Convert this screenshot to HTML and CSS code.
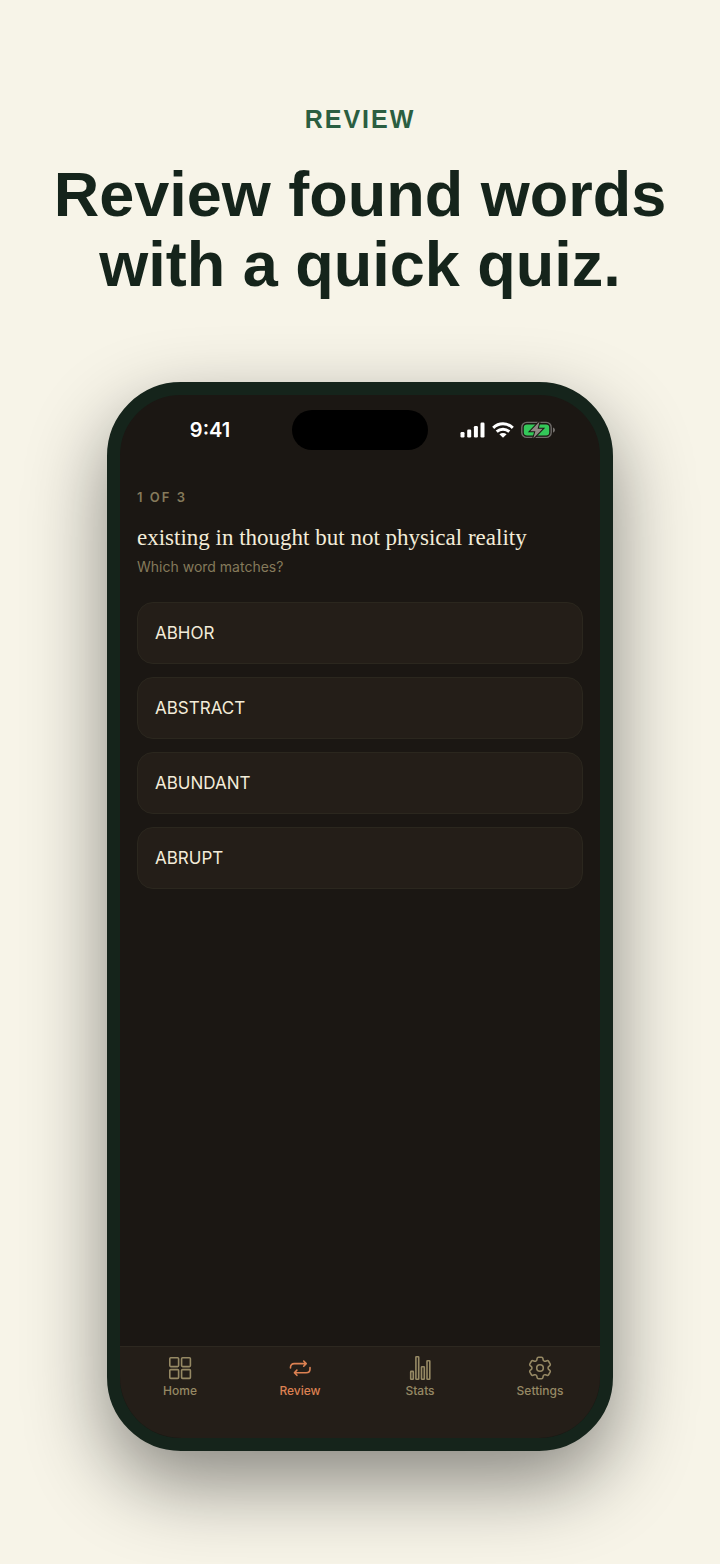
FILE: index.html
```html
<!DOCTYPE html>
<html lang="en">
<head>
<meta charset="utf-8">
<meta name="viewport" content="width=device-width, initial-scale=1">
<title>Review</title>
<link rel="stylesheet" href="styles.css">
</head>
<body>
<main class="promo">
  <header class="intro">
    <p class="eyebrow">REVIEW</p>
    <h1 class="headline">Review found words<br>with a quick quiz.</h1>
  </header>
  <section class="phone">
    <div class="status">
      <span class="clock">9:41</span>
      <span class="island"></span>
      <div class="indicators">
        <svg class="signal" width="25" height="16" viewBox="0 0 25 16" fill="#fff"><rect x="0.500" y="10" width="4" height="5.500" rx="1.200"/><rect x="7.200" y="7.500" width="4" height="8" rx="1.200"/><rect x="13.900" y="4" width="4" height="11.500" rx="1.200"/><rect x="20.500" y="0.500" width="4" height="15" rx="1.200"/></svg>
        <svg class="wifi" width="22" height="16" viewBox="0 0 22 16" fill="none" stroke="#fff" stroke-width="3"><path d="M1.200 5.800C6.800 .5 15.200 .5 20.800 5.800"/><path d="M4.700 9.700c3.700-3.300 8.900-3.300 12.600 0"/><path d="M7.400 12.300c2.100-1.800 5.100-1.800 7.200 0L11 15.800z" fill="#fff" stroke="none"/></svg>
        <svg class="battery" width="35" height="18" viewBox="0 0 35 18"><rect x=".8" y="1.400" width="29.400" height="15" rx="5" fill="none" stroke="#6f6b68" stroke-width="1.400"/><path d="M32 6.400c2.600 1 2.600 4.200 0 5.200z" fill="#75716e"/><rect x="2.800" y="3.400" width="25.400" height="11" rx="3.200" fill="#34c759"/><path class="bolt" d="M18.600.5L9.200 10.200h5.200L12.200 17.600 21.800 7.800h-5.200z"/></svg>
      </div>
    </div>
    <div class="quiz">
      <p class="progress">1 OF 3</p>
      <h2 class="definition">existing in thought but not physical reality</h2>
      <p class="prompt">Which word matches?</p>
      <div class="answers">
        <button class="answer" type="button">ABHOR</button>
        <button class="answer" type="button">ABSTRACT</button>
        <button class="answer" type="button">ABUNDANT</button>
        <button class="answer" type="button">ABRUPT</button>
      </div>
    </div>
    <nav class="tabs">
      <a class="tab" href="#home"><svg width="24" height="24" viewBox="0 0 24 24"><rect x="1.800" y="1.800" width="8.800" height="8.800" rx="1"/><rect x="13.600" y="1.800" width="8.800" height="8.800" rx="1"/><rect x="1.800" y="13.600" width="8.800" height="8.800" rx="1"/><rect x="13.600" y="13.600" width="8.800" height="8.800" rx="1"/></svg>Home</a>
      <a class="tab active" href="#review"><svg width="24" height="24" viewBox="0 0 24 24"><path d="M2.500 12v-.8c0-2.200 1.500-3.600 3.700-3.600h11.600M15.700 5l2.500 2.600-2.500 2.600M22 11.500v1.400c0 2.400-1.500 3.800-3.800 3.800H6.800M8.900 14.100l-2.500 2.600 2.500 2.600"/></svg>Review</a>
      <a class="tab" href="#stats"><svg width="24" height="24" viewBox="0 0 24 24"><rect x="2.700" y="15.400" width="2.600" height="7.800" rx=".5"/><rect x="7.900" y=".8" width="2.800" height="22.400" rx=".5"/><rect x="13.500" y="10.800" width="2.800" height="12.400" rx=".5"/><rect x="19" y="4.800" width="2.800" height="18.400" rx=".5"/></svg>Stats</a>
      <a class="tab" href="#settings"><svg width="24" height="24" viewBox="0 0 24 24"><path d="M9.594 3.940c.09-.542.560-.940 1.110-.940h2.593c.550 0 1.020.398 1.110.940l.213 1.281c.063.374.313.686.645.870.074.040.147.083.220.127.325.196.720.257 1.075.124l1.217-.456a1.125 1.125 0 0 1 1.370.490l1.296 2.247a1.125 1.125 0 0 1-.260 1.431l-1.003.827c-.293.241-.438.613-.430.992a7.723 7.723 0 0 1 0 .255c-.008.378.137.750.430.991l1.004.827c.424.350.534.955.260 1.430l-1.298 2.247a1.125 1.125 0 0 1-1.369.491l-1.217-.456c-.355-.133-.750-.072-1.076.124a6.470 6.470 0 0 1-.220.128c-.331.183-.581.495-.644.869l-.213 1.281c-.090.543-.560.940-1.110.940h-2.594c-.550 0-1.019-.398-1.110-.940l-.213-1.281c-.062-.374-.312-.686-.644-.870a6.520 6.520 0 0 1-.220-.127c-.325-.196-.720-.257-1.076-.124l-1.217.456a1.125 1.125 0 0 1-1.369-.490l-1.297-2.247a1.125 1.125 0 0 1 .260-1.431l1.004-.827c.292-.240.437-.613.430-.991a6.932 6.932 0 0 1 0-.255c.007-.380-.138-.751-.430-.992l-1.004-.827a1.125 1.125 0 0 1-.260-1.430l1.297-2.247a1.125 1.125 0 0 1 1.370-.491l1.216.456c.356.133.751.072 1.076-.124.072-.044.146-.086.220-.128.332-.183.582-.495.644-.869z" transform="translate(-2.400 -2.400) scale(1.200)" stroke-width="1.300"/><circle cx="12" cy="12" r="3.300"/></svg>Settings</a>
    </nav>
  </section>
</main>
</body>
</html>
```
FILE: styles.css
```css
* { box-sizing: border-box; }
body {
  margin: 0;
  background: #f7f4e8;
  color: #15241b;
  font-family: Inter, "Liberation Sans", sans-serif;
}
p, h1, h2 { margin: 0; }
.promo { padding: 104px 0 113px; }
.intro {
  text-align: center;
  font-family: "Liberation Sans", Arial, sans-serif;
  font-weight: 700;
}
.eyebrow {
  color: #2b5e41;
  font-size: 25px;
  line-height: 30px;
  letter-spacing: 2px;
}
.headline {
  margin-top: 25px;
  font-size: 63px;
  line-height: 70px;
}
.phone {
  display: flex;
  flex-direction: column;
  width: calc(100% - 214px);
  max-width: 506px;
  aspect-ratio: 506 / 1069;
  margin: 83px auto 0;
  border: 13px solid #15241b;
  border-radius: 74px;
  background: #1b1713;
  overflow: hidden;
  box-shadow: 0 32px 80px rgba(0, 0, 0, 0.45);
}
.status {
  display: grid;
  grid-template-columns: 1fr 136px 1fr;
  align-items: center;
  padding-top: 15px;
}
.clock {
  justify-self: center;
  padding-left: 8px;
  color: #fff;
  font-size: 20px;
  font-weight: 600;
  line-height: 24px;
}
.island {
  height: 40px;
  border-radius: 20px;
  background: #000;
}
.indicators {
  display: flex;
  align-items: center;
  justify-content: center;
  gap: 7px;
  padding-right: 12px;
}
.indicators svg { flex: none; }
.bolt {
  fill: #8f8984;
  stroke: #1b1713;
  stroke-width: 2;
  paint-order: stroke;
}
.quiz {
  flex: 1;
  padding: 39px 17px 0;
}
.progress {
  color: #857a5b;
  font-size: 13px;
  font-weight: 600;
  line-height: 16px;
  letter-spacing: 2px;
}
.definition {
  margin-top: 18px;
  color: #f3ecd9;
  font-family: "Liberation Serif", serif;
  font-size: 23px;
  font-weight: 400;
  line-height: 30px;
}
.prompt {
  margin-top: 4px;
  color: #857a5b;
  font-size: 14px;
  line-height: 20px;
}
.answers {
  display: grid;
  gap: 13px;
  margin-top: 25px;
}
.answer {
  height: 62px;
  padding: 0 17px;
  border: 1px solid #2b271e;
  border-radius: 16px;
  background: #241e18;
  color: #f3ecd9;
  font-family: inherit;
  font-size: 17px;
  text-align: left;
}
.tabs {
  display: grid;
  grid-template-columns: repeat(4, 1fr);
  height: 92px;
  padding-top: 9px;
  border-top: 1px solid #2d2820;
  background: #241e18;
}
.tab {
  display: flex;
  flex-direction: column;
  align-items: center;
  gap: 3px;
  color: #968964;
  font-size: 12px;
  font-weight: 500;
  line-height: 16px;
  text-decoration: none;
}
.tab svg {
  fill: none;
  stroke: currentColor;
  stroke-width: 1.600;
  stroke-linecap: round;
  stroke-linejoin: round;
}
.tab.active { color: #dd8152; }
```
